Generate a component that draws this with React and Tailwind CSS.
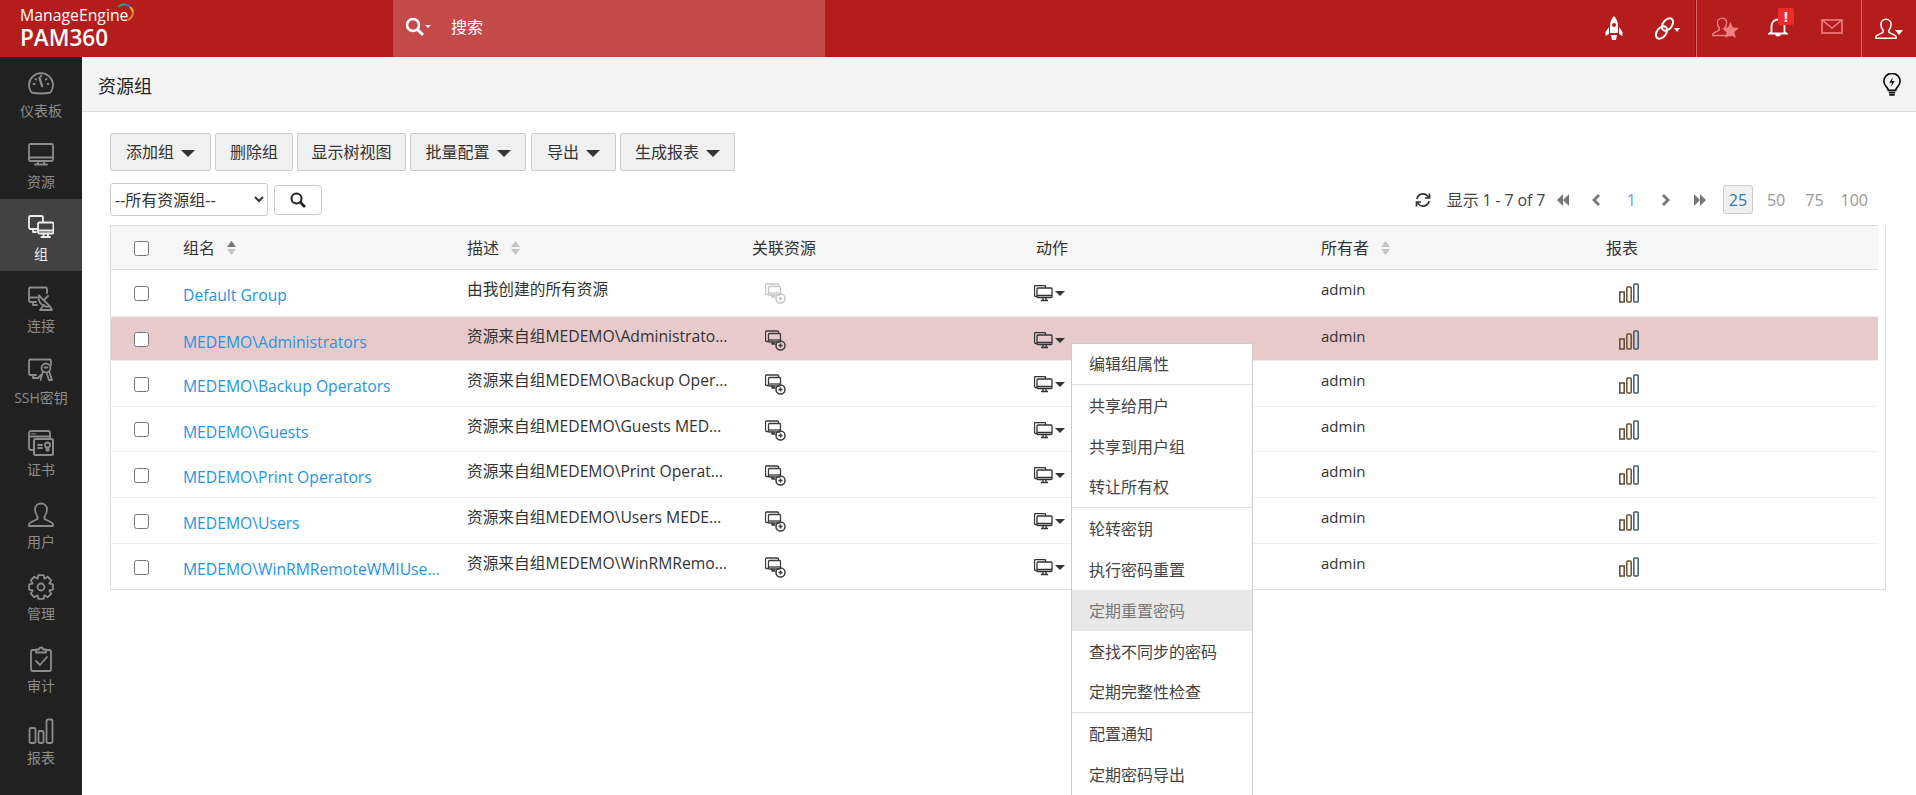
import React from "react";

const S = ({ w = 26, h = 26, vb = "0 0 26 26", children, className = "" }) => (
  <svg width={w} height={h} viewBox={vb} fill="none" stroke="currentColor" strokeWidth="1.800" strokeLinecap="round" strokeLinejoin="round" className={className}>
    {children}
  </svg>
);

const Gauge = () => (
  <S>
    <path d="M3.500 21.500A12 12 0 1 1 22.500 21.500Q13 23.500 3.500 21.500Z" />
    <path d="M11.500 7l2.600 8" strokeWidth="2.400" />
    <path d="M13 4.500v1M5.500 13h1M19.500 13h1M7.500 8l.7.7M18.500 8l-.7.7" />
  </S>
);
const Monitor = () => (
  <S>
    <rect x="1" y="2" width="24" height="17" rx="1.500" />
    <path d="M1 15.500h24M10 19v3M16 19v3M7 22.500h12" />
  </S>
);
const Group = () => (
  <S>
    <path d="M9 15H2.500A1.500 1.500 0 0 1 1 13.500V3.500A1.500 1.500 0 0 1 2.500 2h11A1.500 1.500 0 0 1 15 3.500V7" />
    <path d="M5 15v3h3" />
    <rect x="10" y="8.500" width="15.500" height="11" rx="1.500" />
    <path d="M10 16.500h15.500M15.500 19.500v2.500M20 19.500v2.500M13.500 23h8.500" />
  </S>
);
const Connect = () => (
  <S>
    <path d="M8 16H2.500A1.500 1.500 0 0 1 1 14.500V3A1.500 1.500 0 0 1 2.500 1.500h15A1.500 1.500 0 0 1 19 3v4" />
    <path d="M1 11.500h8M5 16v3h4" />
    <path d="M11 9.500a9 9 0 0 0 11 11Z" />
    <path d="M16 14l4-4" />
    <path d="M16 19l-4 5h12l-2-3.500" />
  </S>
);
const SshKey = () => (
  <S>
    <path d="M8 17H2.500A1.500 1.500 0 0 1 1 15.500V3A1.500 1.500 0 0 1 2.500 1.500h19A1.500 1.500 0 0 1 23 3v4" />
    <path d="M5 17v3h5l3-3" />
    <circle cx="18" cy="10" r="4.500" />
    <path d="M15 13l-2.500 9M21 13l3 9h-3l-2-6" />
    <path d="M16.500 9.500h3" />
  </S>
);
const Cert = () => (
  <S>
    <path d="M5 20H3a2 2 0 0 1-2-2V3a2 2 0 0 1 2-2h17a2 2 0 0 1 2 2v5" />
    <path d="M1 6.500h21" />
    <path d="M3.500 3.800h4" strokeWidth="1" />
    <rect x="6" y="9" width="19" height="16" rx="1.500" strokeWidth="2" />
    <path d="M10 15h4M10 18h4" />
    <circle cx="19.500" cy="15" r="2.500" />
    <path d="M18.500 17.500v3h2v-3" />
  </S>
);
const User = ({ w = 26, h = 26 }) => (
  <S w={w} h={h}>
    <path d="M9.500 14.500C7.500 12 7 9.500 7 7.500 7 4 9.500 1.500 13 1.500S19 4 19 7.500c0 2-.5 4.500-2.500 7v2.500l7 3.500c1 .5 1.500 1 1.500 2V24H1v-1.500c0-1 .5-1.500 1.500-2l7-3.500Z" />
  </S>
);

const gearPath = (() => {
  const teeth = 8;
  const pts = [];
  for (let i = 0; i < teeth; i++) {
    const a = (i / teeth) * Math.PI * 2 - Math.PI / 2;
    const step = (Math.PI * 2) / teeth;
    [[9, -0.5], [12.2, -0.27], [12.2, 0.27], [9, 0.5]].forEach(([r, k]) => {
      const t = a + k * step;
      pts.push((13 + r * Math.cos(t)).toFixed(2) + " " + (13 + r * Math.sin(t)).toFixed(2));
    });
  }
  return "M" + pts.join("L") + "Z";
})();
const Gear = () => (
  <S>
    <path d={gearPath} />
    <circle cx="13" cy="13" r="3.500" />
  </S>
);
const Audit = () => (
  <S>
    <path d="M8 4H4.500A1.500 1.500 0 0 0 3 5.500v18A1.500 1.500 0 0 0 4.500 25h17a1.500 1.500 0 0 0 1.500-1.500v-18A1.500 1.500 0 0 0 21.500 4H18" />
    <path d="M8 6.500V3.500h3a2 2 0 0 1 4 0h3v3Z" />
    <path d="M8 15l4 4 7-8" />
  </S>
);
const Bars = ({ w = 26, h = 26 }) => (
  <S w={w} h={h}>
    <rect x="1.500" y="10" width="6" height="15" rx="1.500" />
    <rect x="10.500" y="13" width="5" height="12" rx="1.500" />
    <rect x="18.500" y="1.500" width="6" height="23.500" rx="1.500" />
  </S>
);
const More = () => (
  <S>
    <circle cx="6" cy="8" r="1.800" fill="currentColor" />
    <path d="M14 14L21 7M15.500 6.500H21.500V12.500" strokeWidth="2.200" />
  </S>
);

const navItems = [
  ["仪表板", Gauge],
  ["资源", Monitor],
  ["组", Group, true],
  ["连接", Connect],
  ["SSH密钥", SshKey],
  ["证书", Cert],
  ["用户", User],
  ["管理", Gear],
  ["审计", Audit],
  ["报表", Bars],
  ["", More],
];

const Caret = ({ className = "" }) => (
  <span className={"inline-block w-0 h-0 border-l-[7px] border-r-[7px] border-t-[7px] border-l-transparent border-r-transparent border-t-[#333] " + className} />
);

const Btn = ({ label, caret, w }) => (
  <button className={"h-[38px] border border-[#ccc] rounded-[2px] bg-[#f0f0f0] text-[#333] flex items-center justify-center gap-[7px] text-[16px] " + w}>
    <span>{label}</span>
    {caret && <Caret className="mt-[3px]" />}
  </button>
);

const Sort = ({ active }) => (
  <svg width="9" height="16" viewBox="0 0 9 16" className="ml-[12px]">
    <path d="M4.500 1L9 7H0Z" fill={active ? "#777" : "#c4c4c4"} />
    <path d="M0 9h9l-4.500 6Z" fill="#c4c4c4" />
  </svg>
);

const ResourceIcon = ({ faded }) => (
  <svg width="21" height="21" viewBox="0 0 21 21" fill="none" stroke={faded ? "#c6c6c6" : "#3c3c3c"} strokeWidth="1.300">
    <path d="M4 11.500H1.500a1 1 0 0 1-1-1V2a1 1 0 0 1 1-1h11a1 1 0 0 1 1 1v1.500" />
    <rect x="3.500" y="3.500" width="12" height="8.500" rx="1" fill="none" />
    <path d="M3.500 10h12" />
    <path d="M7 14h3l-3-2Z" fill={faded ? "#c6c6c6" : "#3c3c3c"} />
    <circle cx="15.500" cy="15.500" r="4.500" fill="none" strokeWidth="1.500" />
    <path d="M13.500 15.500h4M15.500 13.500v4" strokeWidth="1.500" />
  </svg>
);

const ActionIcon = () => (
  <span className="inline-flex items-start ml-[-2px]">
    <svg width="19" height="17" viewBox="0 0 19 17" fill="none" stroke="#333" strokeWidth="1.300">
      <path d="M3 11.500H1.500a1 1 0 0 1-1-1V1.500a1 1 0 0 1 1-1h9a1 1 0 0 1 1 1v1.500" />
      <rect x="3" y="3" width="15" height="9.500" rx="1" />
      <path d="M3 10.500h15M9 12.500v2.500M12 12.500v2.500M7 15.500h7" />
    </svg>
    <span className="ml-[2px] mt-[6px] w-0 h-0 border-l-[5px] border-r-[5px] border-t-[5px] border-l-transparent border-r-transparent border-t-[#333]" />
  </span>
);

const ReportIcon = () => (
  <svg width="20" height="20" viewBox="0 0 20 20" fill="none" strokeWidth="1.500">
    <rect x=".8" y="9" width="4.400" height="10" stroke="#5a4a3a" />
    <rect x="7.800" y="4" width="4.400" height="15" rx="1" stroke="#6b5228" />
    <rect x="14.800" y="1" width="4.400" height="18" rx="1" stroke="#3f5a70" />
  </svg>
);

const rows = [
  ["Default Group", "由我创建的所有资源", "h-[47px]", true],
  ["MEDEMO\\Administrators", "资源来自组MEDEMO\\Administrators MEDEMO", "h-[44px] bg-[#e8caca]"],
  ["MEDEMO\\Backup Operators", "资源来自组MEDEMO\\Backup Operators MEDEMO", "h-[46px]"],
  ["MEDEMO\\Guests", "资源来自组MEDEMO\\Guests MEDEMO\\Guests MEDEMO", "h-[45px]"],
  ["MEDEMO\\Print Operators", "资源来自组MEDEMO\\Print Operators MEDEMO", "h-[46px]"],
  ["MEDEMO\\Users", "资源来自组MEDEMO\\Users MEDEMO\\Users MEDEMO", "h-[46px]"],
  ["MEDEMO\\WinRMRemoteWMIUsers__", "资源来自组MEDEMO\\WinRMRemoteWMIUsers", "h-[45px]"],
];

const cols = "grid grid-cols-[72px_284px_285px_284px_285px_285px_1fr]";

const menu = [
  ["编辑组属性"],
  ["共享给用户", "共享到用户组", "转让所有权"],
  ["轮转密钥", "执行密码重置", "定期重置密码", "查找不同步的密码", "定期完整性检查"],
  ["配置通知", "定期密码导出"],
];

const Nav = ({ d, className = "" }) => (
  <svg width="14" height="14" viewBox="0 0 14 14" fill="#777" className={className}>
    <path d={d} />
  </svg>
);

export default function App() {
  return (
    <div className="relative w-[1916px] h-[795px] overflow-hidden bg-white text-[#333] text-[15px] leading-[20px] font-['Open_Sans','Noto_Sans_CJK_SC',sans-serif]">
      {/* top bar */}
      <header className="h-[57px] bg-[#b51c1c] flex text-white">
        <div className="w-[393px] pl-[20px] relative">
          <div className="text-[15.800px] leading-[18px] pt-[6px] font-normal">ManageEngine</div>
          <div className="text-[22.500px] leading-[27px] font-semibold">PAM360</div>
          <svg width="18" height="18" viewBox="0 0 18 18" fill="none" strokeWidth="2.200" className="absolute left-[117px] top-[3px]">
            <path d="M1 4A9 9 0 0 1 8 1.500" stroke="#3a9a6a" />
            <path d="M8 1.500A9 9 0 0 1 13 4" stroke="#2f7fb8" />
            <path d="M13 4A9 9 0 0 1 16 9" stroke="#e0b030" />
            <path d="M16 9A9 9 0 0 1 11 17" stroke="#e07a30" />
          </svg>
        </div>
        <div className="w-[432px] bg-[#c44a4a] flex items-center pl-[12px] pb-[4px]">
          <svg width="26" height="20" viewBox="0 0 26 20" fill="none" stroke="white" strokeWidth="2.500">
            <circle cx="8" cy="8" r="6" />
            <path d="M12.500 12.500L18 18" strokeWidth="3" />
            <path d="M20 8h6l-3 3Z" fill="white" stroke="none" />
          </svg>
          <span className="ml-[20px] text-[16px]">搜索</span>
        </div>
        <div className="flex-1" />
        <div className="flex h-full">
          <div className="w-[54px] flex items-center justify-center">
            <svg width="18" height="26" viewBox="0 0 18 26" fill="white">
              <path fillRule="evenodd" d="M9 0c2.500 2.500 4 6 4 10v7H5v-7C5 6 6.500 2.500 9 0ZM9 7a2 2 0 1 0 0 4 2 2 0 0 0 0-4Z" />
              <path d="M4 11v7l-3.500 2v-4ZM14 11v7l3.500 2v-4ZM6 19h6l-1 5H7Z" />
            </svg>
          </div>
          <div className="w-[54px] flex items-center justify-center relative">
            <svg width="26" height="25" viewBox="0 0 26 25" fill="none" stroke="white" strokeWidth="2" className="ml-[-2px]">
              <ellipse cx="7.500" cy="16.500" rx="4.500" ry="7" transform="rotate(38 7.500 16.500)" />
              <ellipse cx="13.500" cy="8.500" rx="4.500" ry="7" transform="rotate(38 13.500 8.500)" />
              <path d="M20 12h6l-3 4Z" fill="white" stroke="none" />
            </svg>
          </div>
          <div className="w-[2px] bg-[#8f1414] border-r border-[#d66]" />
          <div className="w-[55px] flex items-center justify-center text-[#f08080] relative">
            <span className="text-[#f08080] ml-[-6px] mb-[3px]"><User w={20} h={20} /></span>
            <svg width="17" height="17" viewBox="0 0 17 17" fill="#f08080" className="absolute left-[25px] top-[22px]">
              <path d="M8.500 0l2.400 5.600 6.100.5-4.600 4 1.400 6-5.300-3.200-5.300 3.200 1.400-6-4.600-4 6.100-.5Z" />
            </svg>
          </div>
          <div className="w-[55px] flex items-center justify-center relative">
            <svg width="20" height="20" viewBox="0 0 20 20" fill="none" stroke="white" strokeWidth="1.800" className="ml-[-4px] mt-[-3px]">
              <path d="M3.500 15V9a6.500 6.500 0 0 1 13 0v6l2 1.500H1.500ZM8 16.500a2 2 0 0 0 4 0" />
            </svg>
            <span className="absolute left-[26px] top-[8px] w-[16px] h-[17px] bg-[#ee2b2b] rounded-[2px] text-white text-[15px] leading-[17px] font-bold text-center">!</span>
          </div>
          <div className="w-[54px] flex items-center justify-center">
            <svg width="22" height="15" viewBox="0 0 22 15" fill="none" stroke="#f08080" strokeWidth="1.600" className="mt-[-4px] ml-[-5px]">
              <rect x="1" y="1" width="20" height="13" />
              <path d="M1 1l10 8 10-8" />
            </svg>
          </div>
          <div className="w-[1px] bg-[#d66]" />
          <div className="w-[54px] flex items-center justify-center relative">
            <span className="ml-[-6px]"><User w={22} h={22} /></span>
            <span className="absolute left-[33px] top-[30px] w-0 h-0 border-l-[4px] border-r-[4px] border-t-[5px] border-l-transparent border-r-transparent border-t-white" />
          </div>
        </div>
      </header>

      <div className="flex h-[738px]">
        {/* sidebar */}
        <nav className="w-[82px] shrink-0 bg-[#212121] overflow-hidden flex flex-col">
          {navItems.map(([label, Icon, active], i) => (
            <div
              key={i}
              className={
                "shrink-0 flex flex-col items-center " +
                (i === 0 ? "h-[70px] pt-[14px] " : "h-[72px] pt-[15px] ") +
                (active ? "bg-[#424242] text-[#eeeeee]" : "text-[#8c8c8c]")
              }
            >
              <Icon />
              <span className="mt-[6px] text-[14px] leading-[16px] whitespace-nowrap">{label}</span>
            </div>
          ))}
        </nav>

        <main className="flex-1 min-w-0">
          <div className="h-[55px] bg-[#f4f4f4] border-b border-[#ddd] flex items-center justify-between pl-[16px] pr-[15px]">
            <h1 className="text-[18px] text-[#222] font-normal pt-[3px]">资源组</h1>
            <svg width="18" height="24" viewBox="0 0 20 26" fill="none" stroke="#111" strokeWidth="1.900" className="mt-[1px]">
              <path d="M6 19c0-3-5-5-5-10a9 9 0 0 1 18 0c0 5-5 7-5 10Z" />
              <path d="M6.500 21.500h7M7 24h6" />
              <path d="M11 4L7 10.500h3L9 15l4-6.500h-3Z" fill="#111" stroke="none" />
            </svg>
          </div>

          <div className="pl-[28px] pr-[30px] pt-[21px]">
            <div className="flex gap-[4px]">
              <Btn label="添加组" caret w="w-[101px]" />
              <Btn label="删除组" w="w-[78px]" />
              <Btn label="显示树视图" w="w-[109px]" />
              <Btn label="批量配置" caret w="w-[116px]" />
              <Btn label="导出" caret w="w-[85px] ml-[1px]" />
              <Btn label="生成报表" caret w="w-[115px]" />
            </div>

            <div className="flex justify-between mt-[12px] h-[33px] pr-[18px]">
              <div className="flex items-center">
                <select className="w-[158px] h-[33px] border border-[#ccc] rounded-[3px] bg-white text-[16px] text-[#333]">
                  <option>--所有资源组--</option>
                </select>
                <button className="ml-[6px] w-[48px] h-[30px] border border-[#ccc] rounded-[4px] bg-white flex items-center justify-center">
                  <svg width="16" height="16" viewBox="0 0 16 16" fill="none" stroke="#222" strokeWidth="2">
                    <circle cx="6.500" cy="6.500" r="5" />
                    <path d="M10.500 10.500L15 15" strokeWidth="2.600" />
                  </svg>
                </button>
              </div>
              <div className="flex items-center text-[16px] text-[#444]">
                <svg width="16" height="16" viewBox="0 0 16 16" fill="none" stroke="#333" strokeWidth="1.700" className="mr-[16px]">
                  <path d="M2 7a6 6 0 0 1 10.500-3L14.500 6M14.500 1.500V6H10" />
                  <path d="M14 9a6 6 0 0 1-10.500 3L1.500 10M1.500 14.500V10H6" />
                </svg>
                <span className="w-[98px] whitespace-nowrap tracking-[-.15px]">显示 1 - 7 of 7</span>
                <Nav d="M7 1v12L1 7ZM13 1v12L7 7Z" className="ml-[11px]" />
                <Nav d="M9 1l2 2-4 4 4 4-2 2-6-6Z" className="ml-[19px]" />
                <span className="ml-[24px] text-[#5aa5de]">1</span>
                <Nav d="M5 1l6 6-6 6-2-2 4-4-4-4Z" className="ml-[23px]" />
                <Nav d="M1 1v12l6-6ZM7 1v12l6-6Z" className="ml-[20px]" />
                <span className="ml-[16px] w-[30px] h-[29px] rounded-[3px] border border-[#ccc] bg-[#f0f0f0] text-[#337ab7] flex items-center justify-center">25</span>
                <span className="ml-[14px] text-[#999]">50</span>
                <span className="ml-[20px] text-[#999]">75</span>
                <span className="ml-[17px] text-[#999]">100</span>
              </div>
            </div>

            <div className="mt-[9px] border-l border-r border-b border-[#ddd] pr-[7px]">
              <div className={cols + " h-[45px] bg-[#f7f7f7] border-t border-b border-[#ddd] items-center text-[16px]"}>
                <div className="pl-[23px] flex pt-[2px]"><input type="checkbox" readOnly className="w-[15px] h-[15px]" /></div>
                <div className="flex items-center">组名<Sort active /></div>
                <div className="flex items-center">描述<Sort /></div>
                <div>关联资源</div>
                <div>动作</div>
                <div className="flex items-center">所有者<Sort /></div>
                <div>报表</div>
              </div>
              {rows.map(([name, desc, rowCls, faded], i) => (
                <div key={i} className={cols + " border-b border-[#eee] last:border-b-0 " + rowCls}>
                  <div className="pl-[23px] flex items-center pt-[1px]"><input type="checkbox" readOnly className="w-[15px] h-[15px]" /></div>
                  <div className="pt-[15px] pr-[26px] text-[15.700px] text-[#1e95e8] truncate">{name}</div>
                  <div className="pt-[9px] pr-[23px] text-[15.700px] truncate">{desc}</div>
                  <div className="pt-[13px] pl-[13px]"><ResourceIcon faded={faded} /></div>
                  <div className="pt-[15px]"><ActionIcon /></div>
                  <div className="pt-[9px]">admin</div>
                  <div className="pt-[13px] pl-[13px]"><ReportIcon /></div>
                </div>
              ))}
            </div>
          </div>
        </main>
      </div>

      {/* open action menu */}
      <div className="absolute left-[1071px] top-[343px] bottom-0 w-[182px] bg-white border-l border-r border-t border-[#ccc]">
        {menu.map((group, g) => (
          <div key={g} className="border-b border-[#ddd] last:border-b-0">
            {group.map((label, k) => (
              <div
                key={label}
                className={
                  "pl-[17px] flex items-center text-[16px] " +
                  (k === group.length - 1 && g < menu.length - 1 ? "h-[40px] " : "h-[41px] ") +
                  (label === "定期重置密码" ? "bg-[#e8e8e8] text-[#777]" : "text-[#444]")
                }
              >
                {label}
              </div>
            ))}
          </div>
        ))}
      </div>
    </div>
  );
}
